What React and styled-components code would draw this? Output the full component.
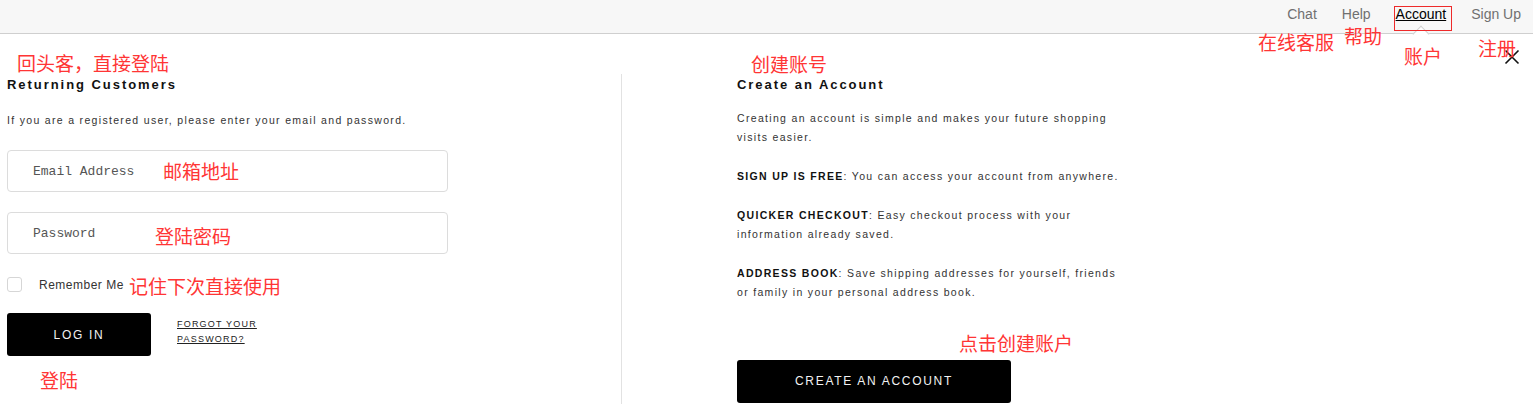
import React from "react";
import styled, { createGlobalStyle } from "styled-components";

const GlobalStyle = createGlobalStyle`
  html, body { margin: 0; padding: 0; background: #fff; }
  body { font-family: "Liberation Sans", Arial, sans-serif; color: #222; }
  *, *::before, *::after { box-sizing: border-box; }
`;

const Page = styled.div`
  position: relative;
  width: 100%;
  min-height: 404px;
  overflow: hidden;
`;

const Header = styled.header`
  position: relative;
  height: 34px;
  display: flex;
  justify-content: flex-end;
  gap: 25px;
  padding-right: 12px;
  background: #f7f7f7;
  border-bottom: 1px solid #cfcfcf;
`;

const NavLink = styled.a`
  position: relative;
  display: block;
  padding-top: 6px;
  font-size: 14px;
  line-height: 16px;
  color: ${(p) => (p.$active ? "#000" : "#707070")};
  text-decoration: ${(p) => (p.$active ? "underline" : "none")};
  cursor: pointer;
`;

const Caret = styled.span`
  position: absolute;
  left: 50%;
  bottom: -7px;
  width: 12px;
  height: 12px;
  margin-left: -6px;
  background: #fff;
  border-top: 1px solid #cfcfcf;
  border-left: 1px solid #cfcfcf;
  transform: rotate(45deg);
`;

const Main = styled.main`
  position: relative;
  display: flex;
  padding-top: 40px;
`;

const CloseButton = styled.button`
  position: absolute;
  top: 15px;
  right: 13px;
  width: 16px;
  height: 16px;
  padding: 0;
  border: none;
  background: none;
  cursor: pointer;
  svg { display: block; }
`;

const LeftCol = styled.section`
  flex: 0 0 621px;
  padding: 0 7px;
`;

const RightCol = styled.section`
  flex: 1;
  min-height: 340px;
  border-left: 1px solid #e2e2e2;
  padding-left: 115px;
`;

const Heading = styled.h2`
  margin: 1px 0 0;
  font-size: 13px;
  line-height: 20px;
  font-weight: 700;
  letter-spacing: 1.95px;
  color: #111;
`;

const Text = styled.p`
  margin: 0;
  font-size: 10.5px;
  line-height: ${(p) => p.$lh || "19.5px"};
  letter-spacing: 1.32px;
  color: #333;
  max-width: ${(p) => p.$max || "none"};
  b { font-weight: 700; color: #111; }
`;

const Intro = styled(Text)`
  margin: 15px 0 20px;
`;

const Field = styled.input`
  display: block;
  width: 441px;
  height: 42px;
  margin: 0 0 ${(p) => p.$mb || "20px"};
  padding: 0 25px;
  border: 1px solid #dcdcdc;
  border-radius: 4px;
  background: #fff;
  outline: none;
  font-family: "Liberation Mono", "Courier New", monospace;
  font-size: 13px;
  &::placeholder {
    color: #555;
    font-weight: 400;
  }
`;

const CheckRow = styled.label`
  display: flex;
  align-items: center;
  gap: 17px;
  font-size: 12px;
  letter-spacing: 0.5px;
  color: #333;
`;

const CheckBox = styled.span`
  display: inline-block;
  width: 15px;
  height: 15px;
  border: 1px solid #d6d6d6;
  border-radius: 3px;
  background: #fff;
`;

const Actions = styled.div`
  display: flex;
  align-items: flex-start;
  gap: 26px;
  margin-top: 21px;
`;

const BlackButton = styled.button`
  width: ${(p) => p.$w};
  height: 43px;
  border: none;
  border-radius: 3px;
  background: #000;
  color: #f2f2f2;
  font-family: "Liberation Sans", Arial, sans-serif;
  font-size: 12px;
  letter-spacing: 1.7px;
  cursor: pointer;
`;

const Forgot = styled.a`
  margin-top: 4px;
  font-size: 9px;
  line-height: 15px;
  letter-spacing: 1.2px;
  color: #222;
  text-decoration: underline;
`;

const Para = styled(Text)`
  margin-top: ${(p) => p.$mt || "19.3px"};
`;

const CreateWrap = styled.div`
  margin-top: 57px;
`;

const Annotation = styled.span`
  position: absolute;
  left: ${(p) => p.$x}px;
  top: ${(p) => p.$y}px;
  font-family: "Noto Sans CJK SC", sans-serif;
  font-size: 19px;
  line-height: 1;
  color: #ff3535;
  white-space: nowrap;
  pointer-events: none;
`;

const RedBox = styled.span`
  position: absolute;
  left: 1394px;
  top: 6px;
  width: 58px;
  height: 25px;
  border: 1px solid #ee2a2a;
  pointer-events: none;
`;

export default function App() {
  return (
    <Page>
      <GlobalStyle />
      <Header>
        <NavLink>Chat</NavLink>
        <NavLink>Help</NavLink>
        <NavLink $active>
          Account
          <Caret />
        </NavLink>
        <NavLink>Sign Up</NavLink>
      </Header>
      <Main>
        <LeftCol>
          <Heading>Returning Customers</Heading>
          <Intro $lh="20px">If you are a registered user, please enter your email and password.</Intro>
          <Field placeholder="Email Address" />
          <Field type="password" placeholder="Password" $mb="23px" />
          <CheckRow>
            <CheckBox />
            Remember Me
          </CheckRow>
          <Actions>
            <BlackButton $w="144px">LOG IN</BlackButton>
            <Forgot>
              FORGOT YOUR
              <br />
              PASSWORD?
            </Forgot>
          </Actions>
        </LeftCol>
        <RightCol>
          <Heading>Create an Account</Heading>
          <Para $mt="13.5px" $max="390px">
            Creating an account is simple and makes your future shopping visits easier.
          </Para>
          <Para $max="390px">
            <b>SIGN UP IS FREE</b>: You can access your account from anywhere.
          </Para>
          <Para $max="390px">
            <b>QUICKER CHECKOUT</b>: Easy checkout process with your information already saved.
          </Para>
          <Para $max="390px">
            <b>ADDRESS BOOK</b>: Save shipping addresses for yourself, friends or family in your personal address book.
          </Para>
          <CreateWrap>
            <BlackButton $w="274px">CREATE AN ACCOUNT</BlackButton>
          </CreateWrap>
        </RightCol>
        <CloseButton aria-label="close">
          <svg width="16" height="16" viewBox="0 0 16 16">
            <path d="M1.5 1.5 L14.5 14.5 M14.5 1.5 L1.5 14.5" stroke="#111" strokeWidth="1.6" fill="none" />
          </svg>
        </CloseButton>
      </Main>

      <RedBox />
      <Annotation $x={17} $y={53}>回头客，直接登陆</Annotation>
      <Annotation $x={751} $y={54}>创建账号</Annotation>
      <Annotation $x={1258} $y={32}>在线客服</Annotation>
      <Annotation $x={1344} $y={26}>帮助</Annotation>
      <Annotation $x={1404} $y={46}>账户</Annotation>
      <Annotation $x={1478} $y={38}>注册</Annotation>
      <Annotation $x={163} $y={161}>邮箱地址</Annotation>
      <Annotation $x={155} $y={226}>登陆密码</Annotation>
      <Annotation $x={129} $y={276}>记住下次直接使用</Annotation>
      <Annotation $x={40} $y={370}>登陆</Annotation>
      <Annotation $x={959} $y={333}>点击创建账户</Annotation>
    </Page>
  );
}
